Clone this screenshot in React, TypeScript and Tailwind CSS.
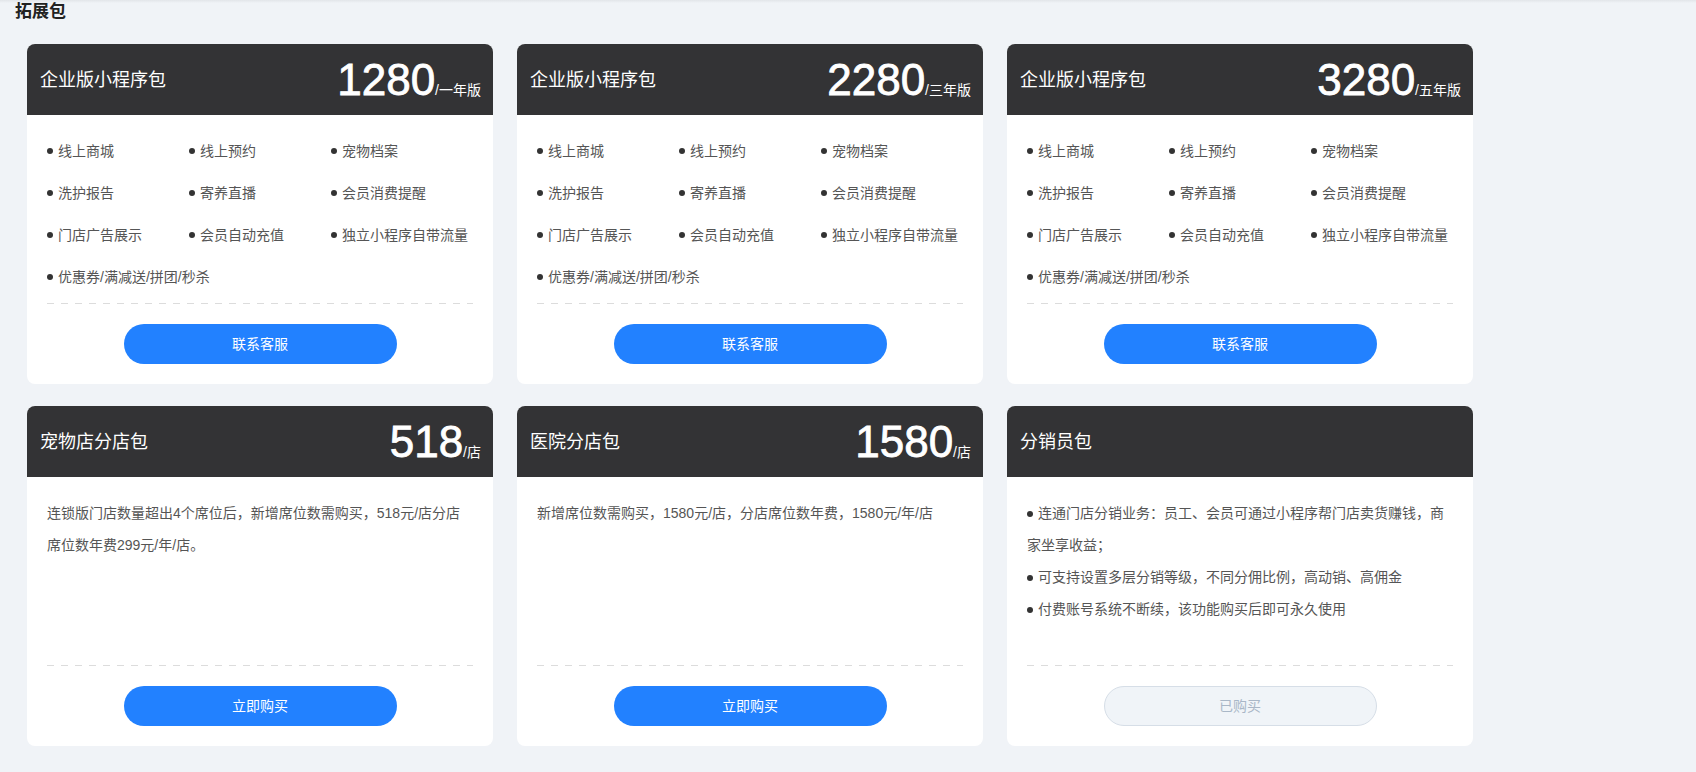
import React from "react";

const features = [
  "线上商城",
  "线上预约",
  "宠物档案",
  "洗护报告",
  "寄养直播",
  "会员消费提醒",
  "门店广告展示",
  "会员自动充值",
  "独立小程序自带流量",
  "优惠券/满减送/拼团/秒杀",
];

const font = "font-['Helvetica_Neue','Liberation_Sans','Noto_Sans_CJK_SC',sans-serif]";

function Header({ title, price, unit }: { title: string; price?: string; unit?: string }) {
  return (
    <div className="flex h-[71px] items-center justify-between rounded-t-lg bg-[#333335] pl-[13px] pr-[12px] text-white">
      <div className="text-[18px] leading-none">{title}</div>
      {price && (
        <div className="flex items-baseline">
          <span className="font-['Liberation_Sans',sans-serif] text-[44px] leading-none [-webkit-text-stroke:0.8px_white]">
            {price}
          </span>
          <span className="text-[14px] leading-none">{unit}</span>
        </div>
      )}
    </div>
  );
}

function Footer({ label, disabled }: { label: string; disabled?: boolean }) {
  return (
    <div className="px-[20px] pb-[20px]">
      <div className="h-px w-full bg-[linear-gradient(to_right,#dcdcdc_50%,transparent_50%)] bg-[length:14px_1px]" />
      <div className="mt-[20px] flex justify-center">
        {disabled ? (
          <div className="flex h-[40px] w-[273px] items-center justify-center rounded-full border border-[#d6dee7] bg-[#f0f4f8] text-[14px] text-[#a9b7c7]">
            {label}
          </div>
        ) : (
          <div className="flex h-[40px] w-[273px] items-center justify-center rounded-full bg-[#2281ff] text-[14px] text-white">
            {label}
          </div>
        )}
      </div>
    </div>
  );
}

function Bullet() {
  return <span className="mr-[5px] inline-block h-[6px] w-[6px] shrink-0 rounded-full bg-[#333] align-middle" />;
}

function FeatureCard({ price, unit }: { price: string; unit: string }) {
  return (
    <div className="flex w-[466px] flex-col rounded-lg bg-white">
      <Header title="企业版小程序包" price={price} unit={unit} />
      <div className="h-[188px] px-[20px] pt-[15px]">
        <div className="grid grid-cols-3">
          {features.map((f) => (
            <div key={f} className="flex h-[42px] items-center whitespace-nowrap text-[14px] text-[#555]">
              <Bullet />
              <span>{f}</span>
            </div>
          ))}
        </div>
      </div>
      <Footer label="联系客服" />
    </div>
  );
}

function TextCard({
  title,
  price,
  unit,
  children,
  label,
  disabled,
}: {
  title: string;
  price?: string;
  unit?: string;
  children: React.ReactNode;
  label: string;
  disabled?: boolean;
}) {
  return (
    <div className="flex w-[466px] flex-col rounded-lg bg-white">
      <Header title={title} price={price} unit={unit} />
      <div className="h-[188px] px-[20px] pt-[20px] text-[14px] leading-[32px] text-[#555]">{children}</div>
      <Footer label={label} disabled={disabled} />
    </div>
  );
}

export default function App() {
  return (
    <div className={`min-h-[772px] w-full bg-[#f0f3f7] ${font}`}>
      <div className="h-[3px] bg-gradient-to-b from-[#e2e5e9] to-[#f0f3f7]" />
      <div className="pl-[15px] text-[17px] font-bold leading-[17px] text-[#222]">拓展包</div>
      <div className="flex flex-col gap-[22px] pl-[27px] pt-[24px]">
        <div className="flex gap-[24px]">
          <FeatureCard price="1280" unit="/一年版" />
          <FeatureCard price="2280" unit="/三年版" />
          <FeatureCard price="3280" unit="/五年版" />
        </div>
        <div className="flex gap-[24px]">
          <TextCard title="宠物店分店包" price="518" unit="/店" label="立即购买">
            连锁版门店数量超出4个席位后，新增席位数需购买，518元/店分店席位数年费299元/年/店。
          </TextCard>
          <TextCard title="医院分店包" price="1580" unit="/店" label="立即购买">
            新增席位数需购买，1580元/店，分店席位数年费，1580元/年/店
          </TextCard>
          <TextCard title="分销员包" label="已购买" disabled>
            <div>
              <Bullet />
              连通门店分销业务：员工、会员可通过小程序帮门店卖货赚钱，商家坐享收益；
            </div>
            <div>
              <Bullet />
              可支持设置多层分销等级，不同分佣比例，高动销、高佣金
            </div>
            <div>
              <Bullet />
              付费账号系统不断续，该功能购买后即可永久使用
            </div>
          </TextCard>
        </div>
      </div>
    </div>
  );
}
